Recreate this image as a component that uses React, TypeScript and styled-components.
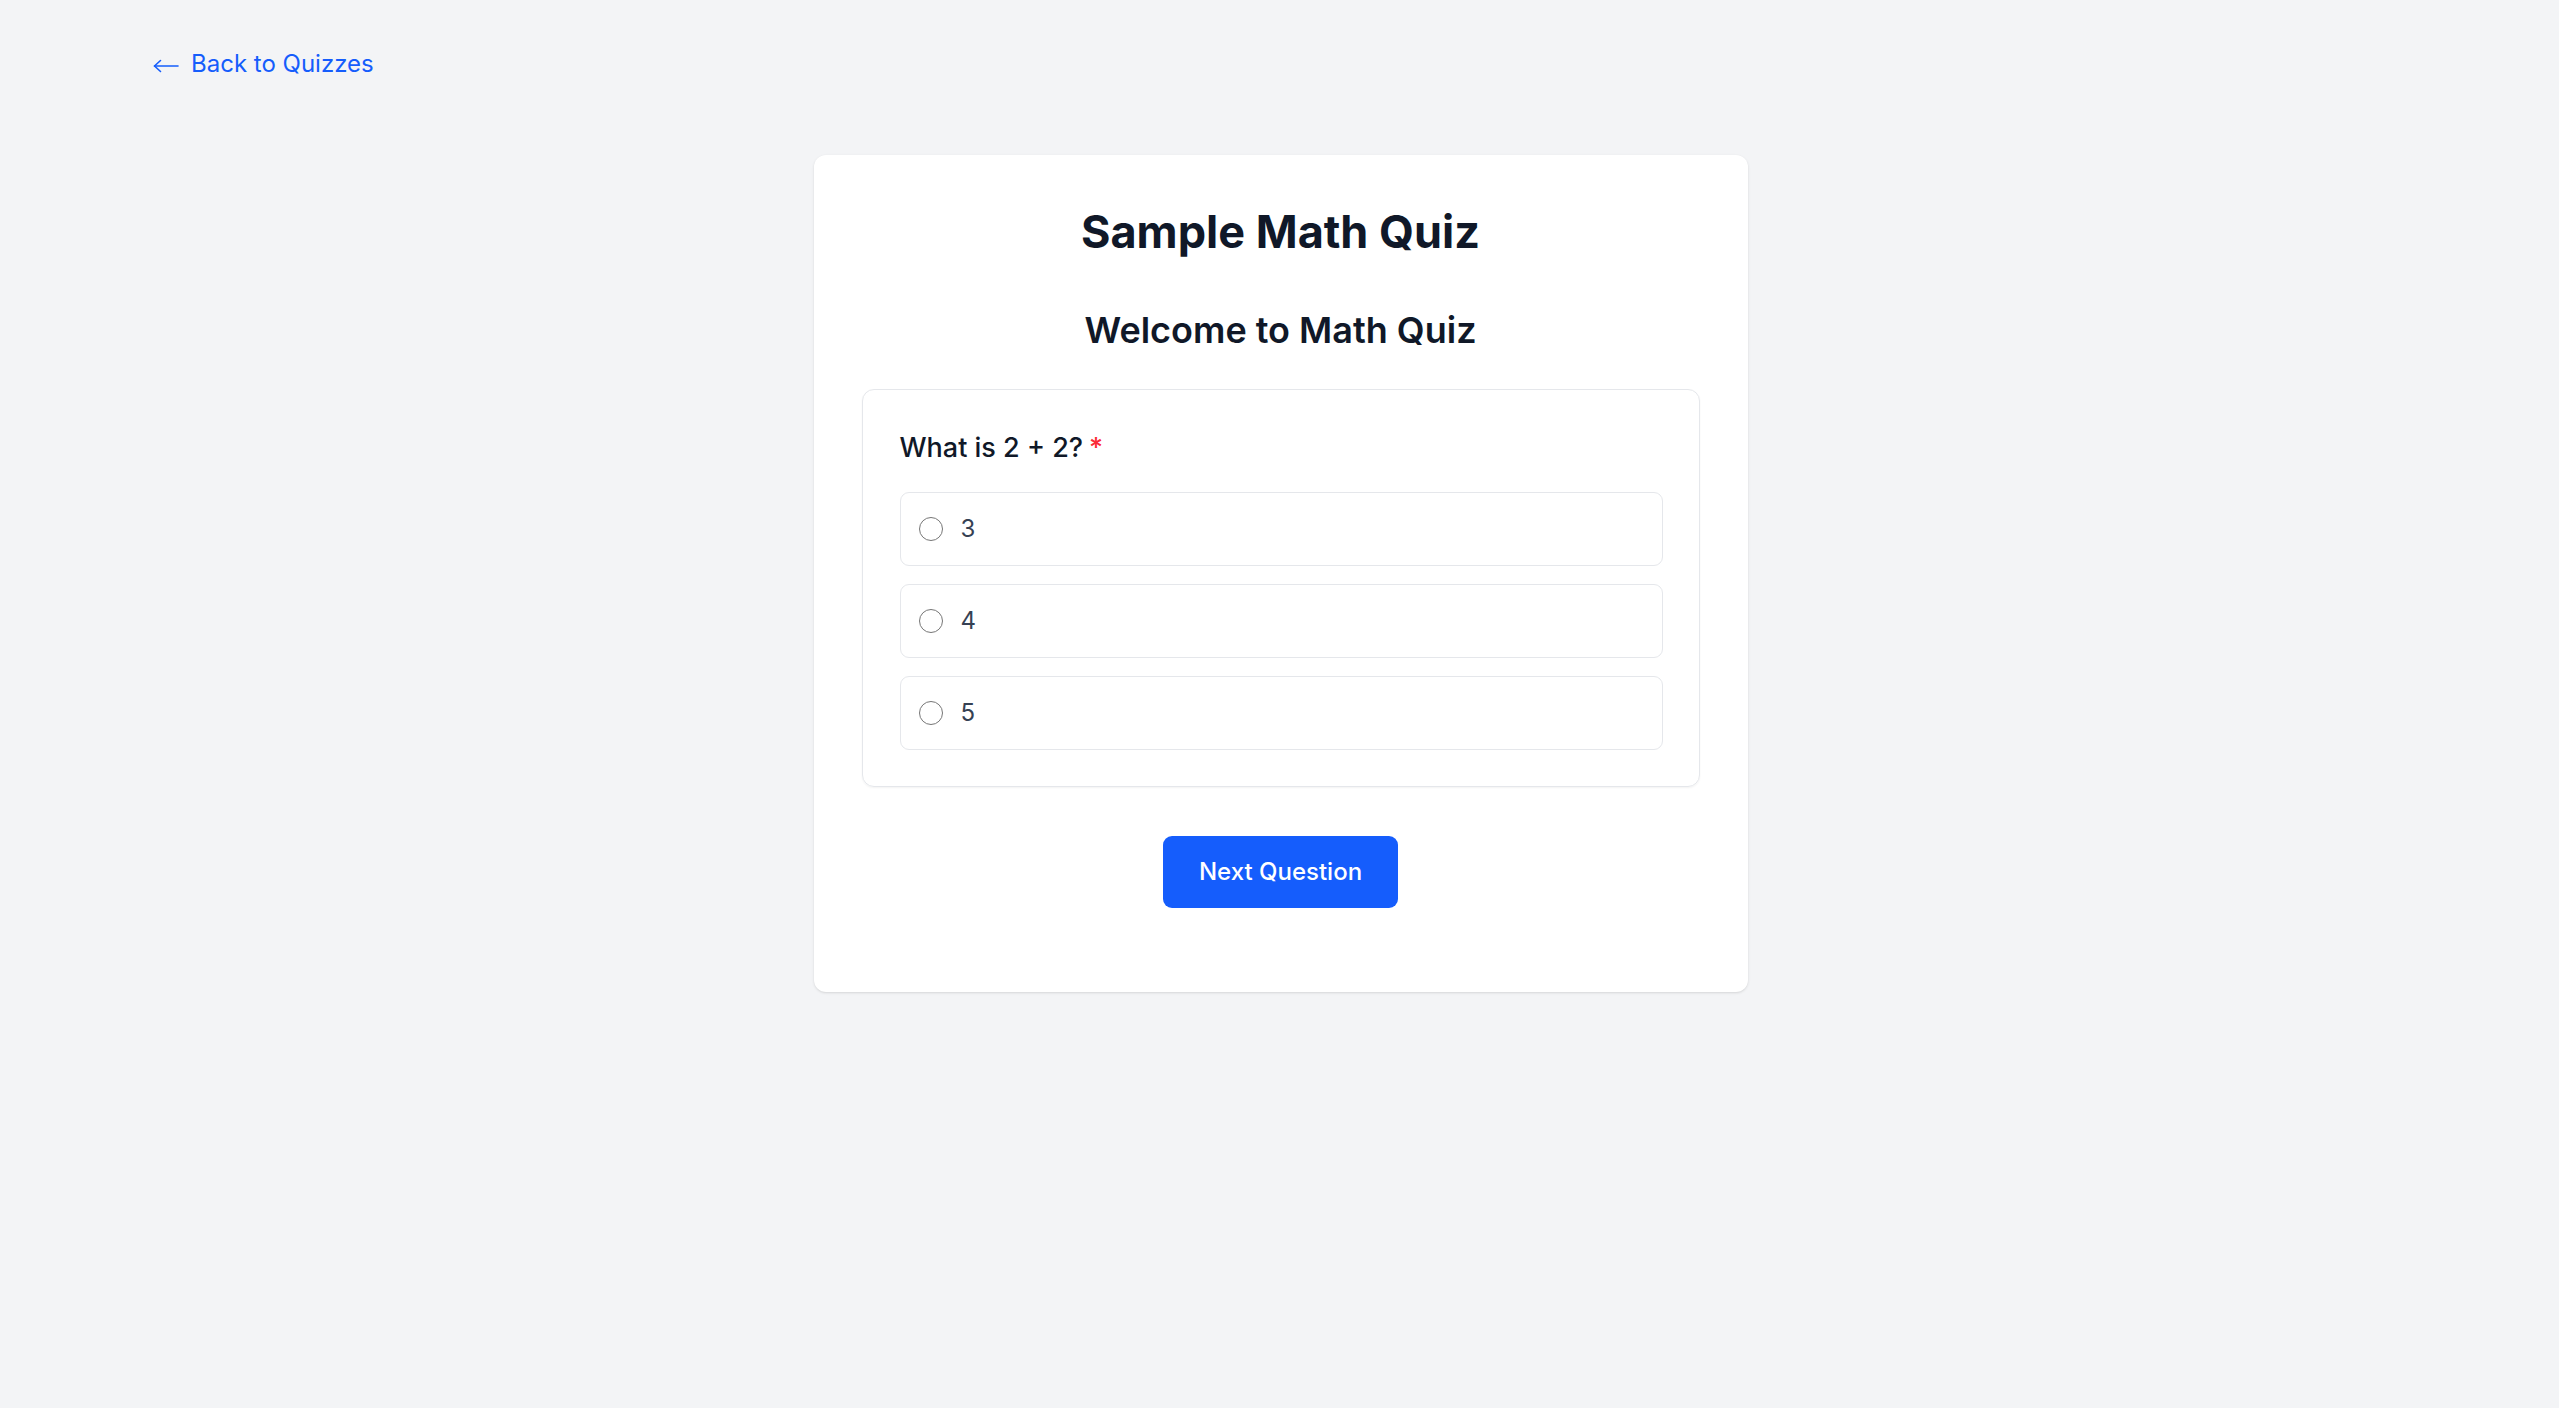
import React from "react";
import styled, { createGlobalStyle } from "styled-components";

const GlobalStyle = createGlobalStyle`
  html, body {
    margin: 0;
    padding: 0;
    background: #f3f4f6;
    font-family: Inter, "Noto Sans", "Liberation Sans", sans-serif;
  }
  * { box-sizing: border-box; }
`;

const Page = styled.div`
  min-height: 1408px;
  background: #f3f4f6;
  padding: 46px 0 48px;
`;

const TopBar = styled.div`
  padding: 0 153px;
  height: 36px;
  display: flex;
  align-items: center;
`;

const BackLink = styled.a`
  color: #155dfc;
  font-size: 24px;
  line-height: 36px;
  text-decoration: none;
  display: inline-flex;
  align-items: center;
  gap: 12px;
  cursor: pointer;
`;

const ArrowIcon = styled.svg`
  width: 26px;
  height: 14px;
  flex: none;
  transform: translateY(2px);
`;

const Card = styled.main`
  width: 934px;
  margin: 73px 0 0 calc(50% - 466px);
  background: #ffffff;
  border-radius: 12px;
  box-shadow: 0 1px 3px rgba(0, 0, 0, 0.1), 0 1px 2px -1px rgba(0, 0, 0, 0.1);
  padding: 50px 48px 84px;
  display: flex;
  flex-direction: column;
`;

const Title = styled.h1`
  margin: 0 0 47px;
  text-align: center;
  font-size: 45px;
  line-height: 54px;
  font-weight: 700;
  color: #101828;
`;

const Subtitle = styled.h2`
  margin: 0 0 35px;
  text-align: center;
  font-size: 36px;
  line-height: 48px;
  font-weight: 600;
  color: #101828;
`;

const QuestionCard = styled.section`
  border: 1.5px solid #e5e7eb;
  border-radius: 12px;
  box-shadow: 0 1px 2px rgba(0, 0, 0, 0.05);
  padding: 37px 36px 36px 37px;
`;

const QuestionText = styled.p`
  margin: 0 0 23px;
  font-size: 27px;
  line-height: 42px;
  font-weight: 500;
  color: #101828;
`;

const Required = styled.span`
  color: #fb2c36;
  margin-left: 6px;
`;

const Options = styled.div`
  display: flex;
  flex-direction: column;
  gap: 18px;
`;

const OptionRow = styled.label`
  display: flex;
  align-items: center;
  gap: 18px;
  height: 74px;
  padding: 0 18px;
  border: 1.5px solid #e5e7eb;
  border-radius: 9px;
  cursor: pointer;
`;

const Radio = styled.input`
  appearance: none;
  margin: 0;
  width: 24px;
  height: 24px;
  border-radius: 50%;
  border: 1.5px solid #767676;
  background: #fff;
  flex: none;
`;

const OptionLabel = styled.span`
  font-size: 24px;
  line-height: 36px;
  color: #364153;
`;

const Actions = styled.div`
  display: flex;
  justify-content: center;
  margin-top: 49px;
`;

const PrimaryButton = styled.button`
  background: #155dfc;
  color: #ffffff;
  border: none;
  border-radius: 9px;
  padding: 18px 36px;
  font-family: inherit;
  font-size: 24px;
  line-height: 36px;
  font-weight: 500;
  cursor: pointer;
`;

const options = ["3", "4", "5"];

export default function App() {
  return (
    <>
      <GlobalStyle />
      <Page>
        <TopBar>
          <BackLink>
            <ArrowIcon viewBox="0 0 26 14" fill="none" stroke="currentColor" strokeWidth="1.6" strokeLinecap="round" strokeLinejoin="round">
              <path d="M1.5 7H25" />
              <path d="M7.5 1.5L1.5 7L7.5 12.5" />
            </ArrowIcon>
            Back to Quizzes
          </BackLink>
        </TopBar>
        <Card>
          <Title>Sample Math Quiz</Title>
          <Subtitle>Welcome to Math Quiz</Subtitle>
          <QuestionCard>
            <QuestionText>
              What is 2 + 2?<Required>*</Required>
            </QuestionText>
            <Options>
              {options.map((o) => (
                <OptionRow key={o}>
                  <Radio type="radio" name="q1" value={o} />
                  <OptionLabel>{o}</OptionLabel>
                </OptionRow>
              ))}
            </Options>
          </QuestionCard>
          <Actions>
            <PrimaryButton>Next Question</PrimaryButton>
          </Actions>
        </Card>
      </Page>
    </>
  );
}
